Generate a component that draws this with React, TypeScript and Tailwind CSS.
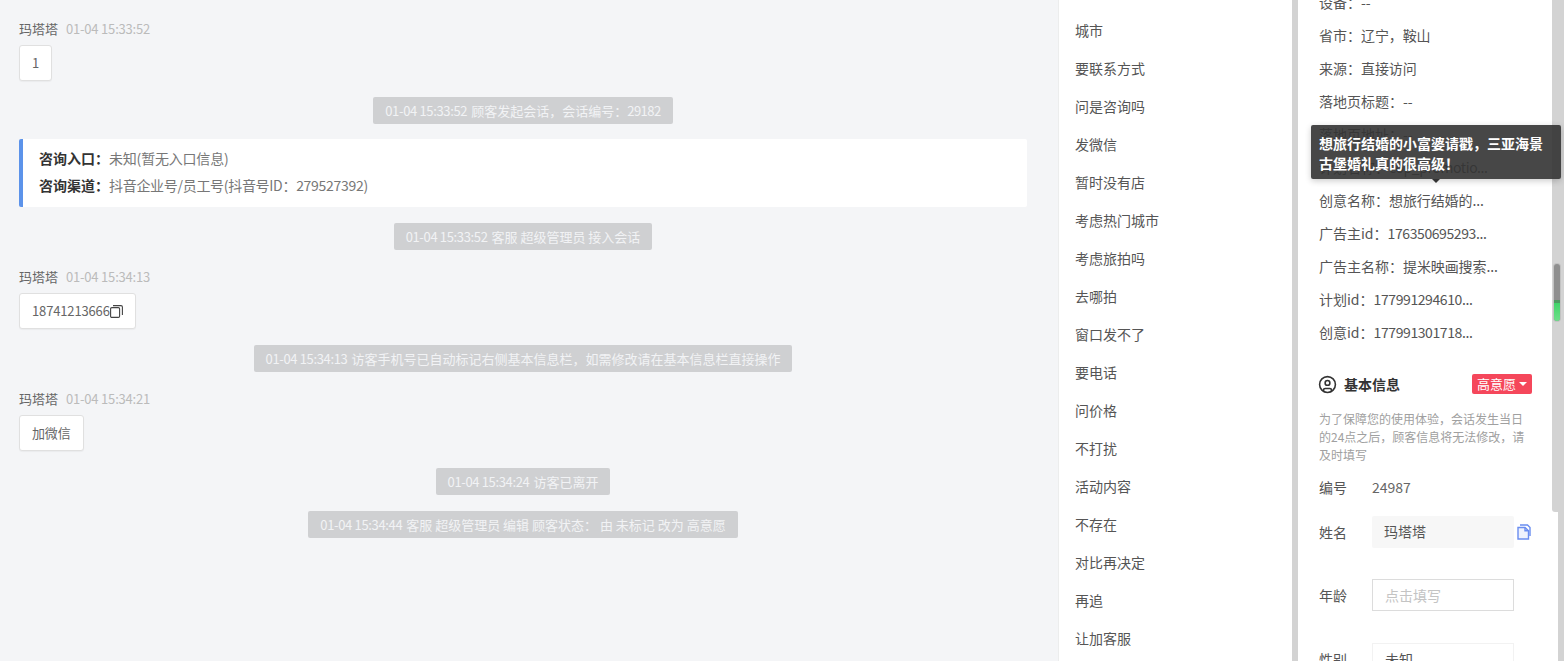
import { CircleUser } from "lucide-react";

const FONT = "font-['Noto_Sans_CJK_SC','Noto_Sans',sans-serif]";

const QUICK_REPLIES = ["城市", "要联系方式", "问是咨询吗", "发微信", "暂时没有店", "考虑热门城市", "考虑旅拍吗", "去哪拍", "窗口发不了", "要电话", "问价格", "不打扰", "活动内容", "不存在", "对比再决定", "再追", "让加客服"];

const AD_INFO = [
  { label: "设备：", value: "--" },
  { label: "省市：", value: "辽宁，鞍山" },
  { label: "来源：", value: "直接访问" },
  { label: "落地页标题：", value: "--" },
  { label: "落地页地址：", value: "--" },
  { label: "计划名称：", value: "cop_promotio...", tight: true },
  { label: "创意名称：", value: "想旅行结婚的..." },
  { label: "广告主id：", value: "176350695293...", tight: true },
  { label: "广告主名称：", value: "提米映画搜索..." },
  { label: "计划id：", value: "177991294610...", tight: true },
  { label: "创意id：", value: "177991301718...", tight: true },
];

function Sender({ time }: { time: string }) {
  return (
    <div className="flex items-center gap-[8px] h-[18px] text-[13px] leading-[18px]">
      <span className="text-[#666]">玛塔塔</span>
      <span className="text-[#bbb] tracking-[-0.2px]">{time}</span>
    </div>
  );
}

function Bubble({ children }: { children: React.ReactNode }) {
  return (
    <div className="mt-[7px] self-start flex items-center h-[36px] px-3 bg-white border border-[#e0e0e0] rounded-[3px] text-[13px] text-[#666] tracking-[-0.15px] shadow-[0_1px_1px_rgba(0,0,0,0.04)]">
      {children}
    </div>
  );
}

function Notice({ time, className, children }: { time: string; className: string; children: React.ReactNode }) {
  return (
    <div className={`self-center flex items-center h-[27px] px-3 bg-[#cfd0d2] rounded-[2px] text-[13px] text-[#f2f3f5] whitespace-nowrap ${className}`}>
      <span className="tracking-[-0.35px] mr-[4px]">{time}</span>
      <span>{children}</span>
    </div>
  );
}

function FieldRow({ label, children }: { label: string; children: React.ReactNode }) {
  return (
    <div className="flex items-center h-[32px] text-[14px] text-[#555]">
      <span className="w-[53px] shrink-0">{label}</span>
      {children}
    </div>
  );
}

export default function App() {
  return (
    <div className={`flex w-[1564px] h-[661px] overflow-hidden bg-[#d3d3d3] ${FONT}`}>
      {/* Chat log */}
      <div className="w-[1059px] shrink-0 flex flex-col pt-[20px] pl-[19px] pr-[31px] bg-[#f4f5f7] border-r border-[#eceded]">
        <Sender time="01-04 15:33:52" />
        <Bubble>1</Bubble>
        <Notice className="mt-[16px]" time="01-04 15:33:52">
          顾客发起会话，会话编号：<span className="tracking-[-0.5px]">29182</span>
        </Notice>

        <div className="mt-[15px] h-[68px] flex flex-col gap-[9px] pt-[10px] pl-[16px] bg-white border-l-4 border-[#5c93ea] rounded-[2px] text-[14px] leading-[18px]">
          <div className="flex">
            <span className="w-[70px] font-bold text-[#333]">咨询入口：</span>
            <span className="text-[#777] tracking-[-0.2px]">未知(暂无入口信息)</span>
          </div>
          <div className="flex">
            <span className="w-[70px] font-bold text-[#333]">咨询渠道：</span>
            <span className="text-[#777] tracking-[-0.3px]">抖音企业号/员工号(抖音号ID：279527392)</span>
          </div>
        </div>

        <Notice className="mt-[16px]" time="01-04 15:33:52">客服 超级管理员 接入会话</Notice>

        <div className="mt-[18px]">
          <Sender time="01-04 15:34:13" />
        </div>
        <Bubble>
          18741213666
          <svg width="13" height="13" viewBox="0 0 13 13" fill="none" stroke="#444" strokeWidth="1.1">
            <rect x="0.6" y="2.6" width="9" height="9.8" rx="1.2" />
            <path d="M3 .6h8a1.4 1.4 0 0 1 1.4 1.4v8" />
          </svg>
        </Bubble>
        <Notice className="mt-[16px]" time="01-04 15:34:13">访客手机号已自动标记右侧基本信息栏，如需修改请在基本信息栏直接操作</Notice>

        <div className="mt-[18px]">
          <Sender time="01-04 15:34:21" />
        </div>
        <Bubble>加微信</Bubble>
        <Notice className="mt-[17px]" time="01-04 15:34:24">访客已离开</Notice>
        <Notice className="mt-[16px]" time="01-04 15:34:44">客服 超级管理员 编辑 顾客状态： 由 未标记 改为 高意愿</Notice>
      </div>

      {/* Quick replies */}
      <div className="w-[233px] shrink-0 flex flex-col pt-[11px] pl-[16px] bg-white">
        {QUICK_REPLIES.map((item) => (
          <div key={item} className="h-[38px] shrink-0 flex items-center text-[14px] text-[#555]">
            {item}
          </div>
        ))}
      </div>

      {/* Customer panel */}
      <div className="w-[260px] ml-[6px] shrink-0 flex flex-col mt-[-14px] pl-[21px] pr-[26px] bg-white">
        {AD_INFO.map((row) => (
          <div key={row.label} className="h-[33px] shrink-0 flex items-center text-[14px] text-[#555] whitespace-nowrap">
            <span>{row.label}</span>
            <span className={row.tight ? "tracking-[-0.4px]" : "tracking-[-0.1px]"}>{row.value}</span>
          </div>
        ))}

        <div className="mt-[23px] h-[24px] shrink-0 flex items-center">
          <CircleUser size={19} strokeWidth={2} className="ml-[-1px] text-[#333]" />
          <span className="ml-[7px] text-[14px] font-bold text-[#333]">基本信息</span>
          <span className="ml-auto flex items-center justify-center gap-[3px] w-[60px] h-[20px] bg-[#f5475b] rounded-[2px] text-[13px] text-white">
            高意愿
            <span className="w-0 h-0 border-x-[4px] border-x-transparent border-t-[4px] border-t-white" />
          </span>
        </div>

        <p className="mt-[14px] w-[212px] text-[12px] leading-[18px] text-[#a0a0a0]">
          为了保障您的使用体验，会话发生当日的24点之后，顾客信息将无法修改，请及时填写
        </p>

        <div className="mt-[14px] flex items-center h-[18px] text-[14px] text-[#555]">
          <span className="w-[53px]">编号</span>
          <span className="text-[#666]">24987</span>
        </div>

        <div className="mt-[20px] flex flex-col">
          <FieldRow label="姓名">
            <div className="w-[142px] h-[32px] flex items-center px-3 pb-[2px] bg-[#f7f7f7] rounded-[2px] text-[#555]">玛塔塔</div>
            <svg className="ml-[3px]" width="14" height="16" viewBox="0 0 14 16" fill="none" stroke="#6a8df0" strokeWidth="1.4">
              <path d="M3 1h7.5L13 3.5V12" />
              <path d="M1 3.5h7l3.5 3.2V15H1z" fill="#eef2fd" />
              <path d="M8 3.5v3.2h3.5" />
            </svg>
          </FieldRow>
          <div className="mt-[31px]">
            <FieldRow label="年龄">
              <div className="w-[142px] h-[32px] flex items-center px-3 bg-white border border-[#dcdcdc] text-[#c4c4c4]">点击填写</div>
            </FieldRow>
          </div>
          <div className="mt-[32px]">
            <FieldRow label="性别">
              <div className="w-[142px] h-[32px] flex items-center px-3 bg-white border border-[#f2f2f2] text-[#555]">未知</div>
            </FieldRow>
          </div>
        </div>
      </div>

      {/* Scrollbar track and thumb, over the panel edge */}
      <div className="absolute left-[1552px] top-0 w-[6px] h-[512px] bg-[#d3d3d3] rounded-bl-[3px]" />
      <div className="absolute left-[1553px] top-[263px] w-[8px] h-[59px] rounded-[4px] overflow-hidden bg-[#8f8f8f] border border-[#e4e4e4]/60">
        <div className="mt-[36px] h-[22px] border-t-[3px] border-[#4e9a62] bg-gradient-to-b from-[#3ed469] to-[#6fe08c]" />
      </div>

      {/* Tooltip */}
      <div className="absolute left-[1311px] top-[125px] w-[250px] h-[54px] px-[8px] pt-[8px] bg-[#333]/90 rounded-[2px] text-[14px] font-bold leading-[20px] text-white shadow-[0_2px_6px_rgba(0,0,0,0.2)]">
        想旅行结婚的小富婆请戳，三亚海景古堡婚礼真的很高级！
        <span className="absolute left-[121px] top-[54px] w-0 h-0 border-x-[4px] border-x-transparent border-t-[4px] border-t-[#333]" />
      </div>
    </div>
  );
}
